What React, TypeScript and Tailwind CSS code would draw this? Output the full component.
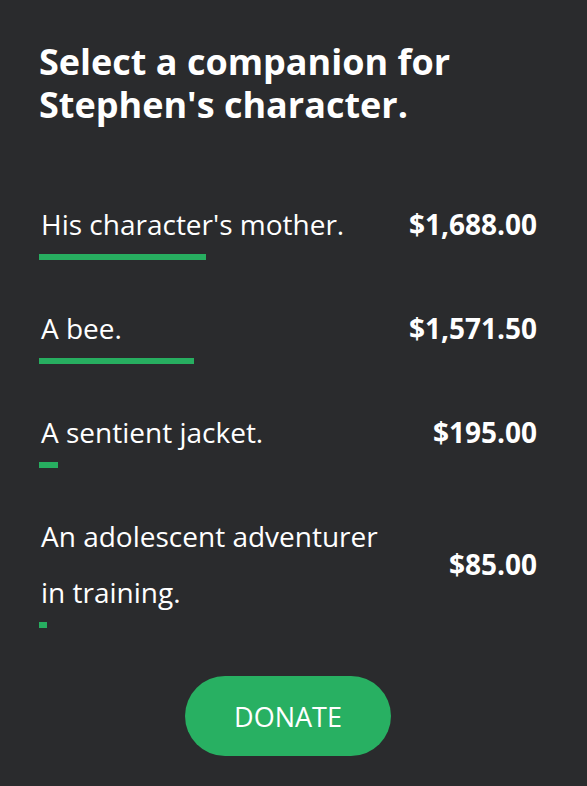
const companions = [
  { label: "His character's mother.", amount: 1688 },
  { label: 'A bee.', amount: 1571.5 },
  { label: 'A sentient jacket.', amount: 195 },
  { label: 'An adolescent adventurer in training.', amount: 85 },
];

const total = companions.reduce((sum, c) => sum + c.amount, 0);

function formatUSD(n: number) {
  return '$' + n.toLocaleString('en-US', { minimumFractionDigits: 2, maximumFractionDigits: 2 });
}

export default function App() {
  return (
    <div
      className="min-h-screen w-full bg-[#2a2b2d] text-white pl-[39px] pr-[50px] pt-[40px] pb-[30px]"
      style={{ fontFamily: '"Open Sans", "Noto Sans", sans-serif' }}
    >
      {/* Heading */}
      <h1 className="text-[36px] leading-[43px] font-bold">
        Select a companion for Stephen's character.
      </h1>

      {/* Options */}
      <div className="mt-[70px] flex flex-col gap-[40px]">
        {companions.map((c) => (
          <div key={c.label}>
            <div className="flex items-center justify-between">
              <span className="w-[350px] pl-[2px] text-[28px] leading-[56px]">{c.label}</span>
              <span className="text-[28px] font-bold">{formatUSD(c.amount)}</span>
            </div>
            <div className="mt-[2px] h-[6px] w-[350px]">
              <div
                className="h-full bg-[#27ae60]"
                style={{ width: `${(c.amount / total) * 100}%` }}
              />
            </div>
          </div>
        ))}
      </div>

      {/* Donate */}
      <div className="mt-[48px] flex justify-center">
        <button className="h-[80px] w-[206px] rounded-full bg-[#28b062] pt-[2px] text-[27px] text-white">
          DONATE
        </button>
      </div>
    </div>
  );
}
